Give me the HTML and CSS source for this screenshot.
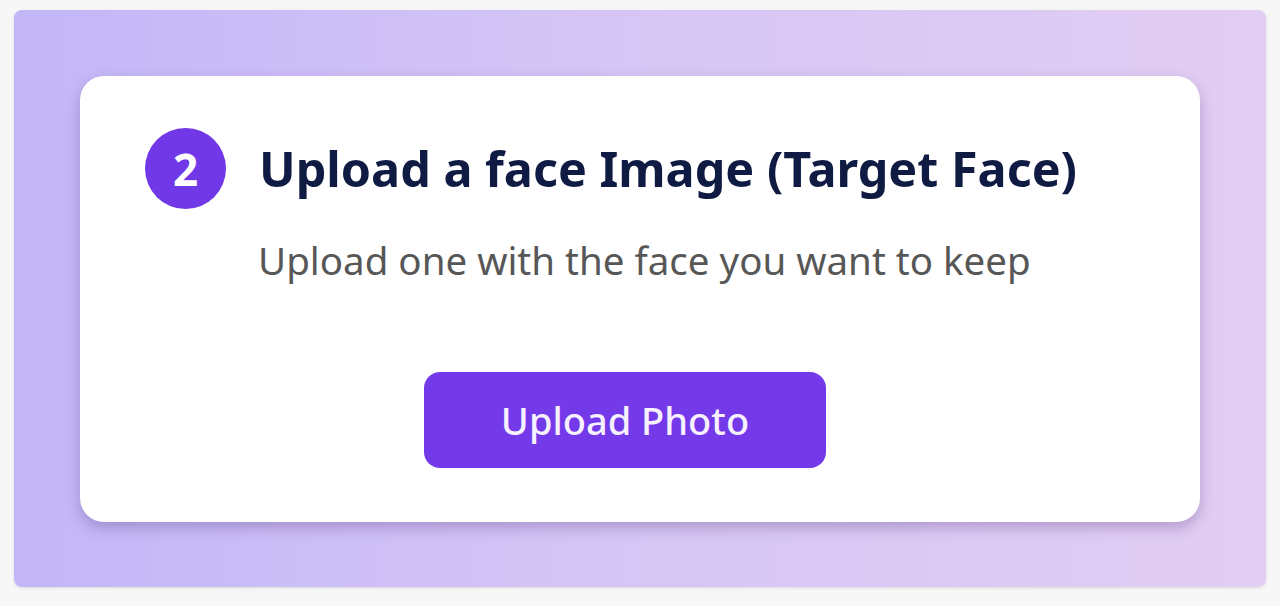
FILE: index.html
```html
<!DOCTYPE html>
<html lang="en">
<head>
<meta charset="utf-8">
<title>Upload a face Image</title>
<link rel="stylesheet" href="styles.css">
</head>
<body>
<div class="panel">
  <div class="card">
    <div class="head">
      <div class="step">2</div>
      <h2 class="title">Upload a face Image (Target Face)</h2>
    </div>
    <p class="sub">Upload one with the face you want to keep</p>
    <button class="btn" type="button">Upload Photo</button>
  </div>
</div>
</body>
</html>
```
FILE: styles.css
```css
* { box-sizing: border-box; }
html, body { margin: 0; padding: 0; }
body {
  width: 1280px;
  height: 606px;
  background: #f7f7f8;
  font-family: "Noto Sans", "Open Sans", sans-serif;
  padding: 10px 14px 19px 14px;
}
.panel {
  height: 577px;
  border-radius: 8px;
  background: linear-gradient(90deg, #c3b6f8 0%, #d6c6f5 50%, #e2cdf3 100%);
  box-shadow: 0 1px 3px rgba(0,0,0,0.12);
  padding: 66px 66px 0 66px;
}
.card {
  height: 446px;
  background: #fff;
  border-radius: 24px;
  box-shadow: 0 6px 14px rgba(80, 50, 120, 0.3);
  padding: 52px 65px 0 65px;
  display: flex;
  flex-direction: column;
  align-items: flex-start;
}
.head {
  display: flex;
  align-items: center;
  gap: 33px;
}
.step {
  width: 81px;
  height: 81px;
  border-radius: 50%;
  background: #7138e8;
  color: #fff;
  font-weight: 700;
  font-size: 44px;
  display: flex;
  align-items: center;
  justify-content: center;
  flex: none;
}
.title {
  margin: 0;
  font-size: 48.5px;
  font-weight: 700;
  color: #0f1b42;
  line-height: 1.2;
  white-space: nowrap;
}
.sub {
  margin: 28px 0 0 113px;
  font-size: 38.5px;
  color: #575757;
  line-height: 1.2;
  white-space: nowrap;
}
.btn {
  margin: 89px 0 0 279px;
  width: 402px;
  height: 96px;
  border: none;
  border-radius: 16px;
  background: #7439e8;
  color: #f6f0ff;
  font-family: inherit;
  font-size: 38px;
  font-weight: 500;
  padding: 0;
}
```
